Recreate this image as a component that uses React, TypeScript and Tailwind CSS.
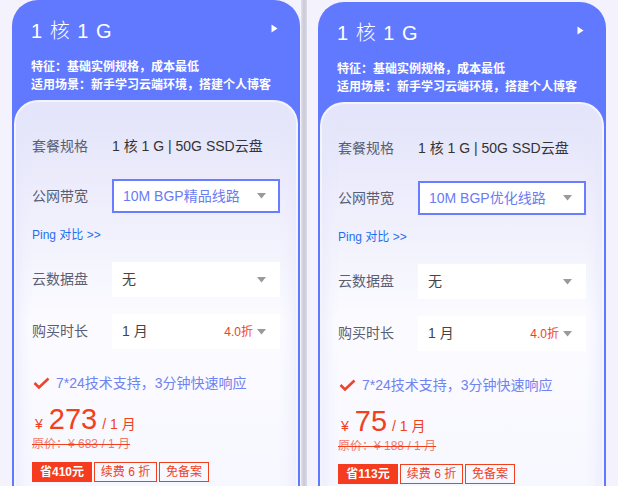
const cards = [
  { line: "10M BGP精品线路", price: "273", origin: "683", save: "410", offset: "mt-0" },
  { line: "10M BGP优化线路", price: "75", origin: "188", save: "113", offset: "mt-[2px]" },
];

function Caret() {
  return (
    <svg width="9" height="6" viewBox="0 0 9 6" className="shrink-0">
      <path d="M0 0h9L4.5 5.5z" fill="#9a9a9a" />
    </svg>
  );
}

function Card({ item }: { item: (typeof cards)[number] }) {
  return (
    <div className={`w-[288px] h-[540px] shrink-0 rounded-t-[26px] bg-[#6179ff] px-[2px] ${item.offset}`}>
      <div className="pl-[17px] pr-[20px] pt-[17px] text-white">
        <div className="flex items-center justify-between h-[28px]">
          <span className="text-[20px] tracking-[1px] font-light">1 核 1 G</span>
          <svg width="7" height="9" viewBox="0 0 7 9" className="-mt-[5px]">
            <path d="M0.5 0.5 L6.5 4.5 L0.5 8.5z" fill="#fff" />
          </svg>
        </div>
        <div className="mt-[13px] text-[12px] leading-[18px] font-semibold">
          <p>特征：基础实例规格，成本最低</p>
          <p>适用场景：新手学习云端环境，搭建个人博客</p>
        </div>
      </div>

      <div className="mt-[6px] h-[440px] rounded-t-[24px] border-2 border-b-0 border-[#f4f4ff] bg-gradient-to-b from-[#e3e3fa] via-[#fbfbff] to-[#f6f6ff] shadow-[inset_0_0_18px_#e6e6fb] px-[16px] pt-[26px]">
        <div className="flex items-center h-[36px] text-[14px]">
          <span className="w-[80px] text-[#5a5e72]">套餐规格</span>
          <span className="text-[#333]">1 核 1 G | 50G SSD云盘</span>
        </div>

        <div className="flex items-center mt-[15px] text-[14px]">
          <span className="w-[80px] text-[#5a5e72]">公网带宽</span>
          <div className="w-[168px] h-[34px] border-2 border-[#6a7cff] bg-white flex items-center justify-between pl-[9px] pr-[12px]">
            <span className="text-[#6a7cf2]">{item.line}</span>
            <Caret />
          </div>
        </div>

        <div className="mt-[13px] h-[18px] leading-[18px] text-[12px] text-[#1f6ef2]">Ping 对比 &gt;&gt;</div>

        <div className="flex items-center mt-[18px] text-[14px]">
          <span className="w-[80px] text-[#5a5e72]">云数据盘</span>
          <div className="w-[168px] h-[35px] bg-white flex items-center justify-between pl-[10px] pr-[14px]">
            <span className="text-[#444]">无</span>
            <Caret />
          </div>
        </div>

        <div className="flex items-center mt-[17px] text-[14px]">
          <span className="w-[80px] text-[#5a5e72]">购买时长</span>
          <div className="w-[168px] h-[35px] bg-white flex items-center justify-between pl-[10px] pr-[14px]">
            <span className="text-[#444]">1 月</span>
            <span className="flex items-center gap-[4px]">
              <span className="text-[12px] text-[#f23d2b]">4.0折</span>
              <Caret />
            </span>
          </div>
        </div>

        <div className="flex items-center gap-[6px] mt-[24px] h-[20px] pl-[1px]">
          <svg width="17" height="12" viewBox="0 0 17 12">
            <path d="M1.5 6 L6 10.5 L15.5 1.5" stroke="#f0452a" strokeWidth="2.6" fill="none" strokeLinejoin="miter" />
          </svg>
          <span className="text-[14px] text-[#7083f0]">7*24技术支持，3分钟快速响应</span>
        </div>

        <div className="flex items-baseline mt-[9px] h-[34px] text-[#f2401c] pl-[3px]">
          <span className="text-[14px] mr-[6px]">¥</span>
          <span className="text-[29px] leading-[34px]">{item.price}</span>
          <span className="text-[14px] ml-[5px]">/ 1 月</span>
        </div>
        <div className="h-[16px] leading-[16px] text-[12px] text-[#f47a68] line-through decoration-[#f2401c]">
          原价：¥ {item.origin} / 1 月
        </div>

        <div className="flex gap-[2px] mt-[10px] text-[12px]">
          <span className="h-[20px] w-[60px] flex items-center justify-center bg-[#f53c1e] text-white font-bold">省{item.save}元</span>
          <span className="h-[20px] w-[63px] flex items-center justify-center border border-[#f2401c] text-[#f2401c]">续费 6 折</span>
          <span className="h-[20px] w-[50px] flex items-center justify-center border border-[#f2401c] text-[#f2401c]">免备案</span>
        </div>
      </div>
    </div>
  );
}

export default function App() {
  return (
    <div
      className="w-[618px] h-[486px] overflow-hidden bg-[#f4f3fd] flex items-start pl-[12px]"
      style={{ fontFamily: '"Liberation Sans", "Noto Sans CJK SC", sans-serif' }}
    >
      <Card item={cards[0]} />
      <div className="ml-[1px] w-[6px] h-full shrink-0 bg-gradient-to-r from-[#e2e2ec] via-[#c9c9d6] to-[#dcdce8]" />
      <div className="ml-[11px]">
        <Card item={cards[1]} />
      </div>
    </div>
  );
}
